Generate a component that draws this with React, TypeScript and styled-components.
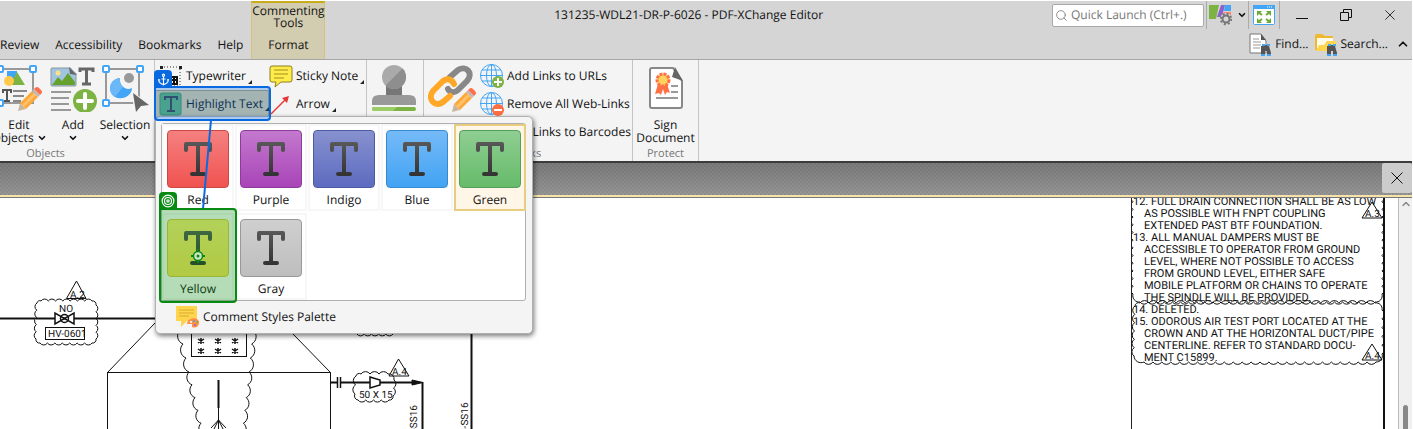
import React from 'react';
import styled, { createGlobalStyle } from 'styled-components';
import { Anchor, ChevronDown, ChevronUp, Search, Target } from 'lucide-react';

const Global = createGlobalStyle`
  * { box-sizing: border-box; }
  html, body { margin: 0; background: #fff; }
  body { font: 12px/16px "Open Sans", "Noto Sans", sans-serif; color: #111; overflow: hidden; text-rendering: geometricPrecision; }
  button, input { font: inherit; color: inherit; text-rendering: inherit; }
  button { border: 0; background: none; padding: 0; margin: 0; }
  svg { display: block; flex: none; }
`;

const Page = styled.div`
  display: flex;
  flex-direction: column;
  height: 100vh;
  padding-right: 1px;
  border-top: 1px solid #fff;
`;

/* ---------- title bar and tabs ---------- */
const Header = styled.header`
  display: flex;
  height: 59px;
  flex: none;
  background: #d5d5d5;
  border-bottom: 1px solid #a6a6a6;
`;
const Tabs = styled.nav`
  display: flex;
  align-items: flex-end;
  gap: 16px;
  padding-right: 8px;
`;
const Tab = styled.button`
  height: 28px;
  white-space: nowrap;
`;
const ContextTab = styled.button`
  display: flex;
  flex-direction: column;
  align-items: center;
  justify-content: space-between;
  width: 74px;
  padding: 2px 0 8px;
  line-height: 12px;
  background: #d2ccb0;
  border: solid #d6c27c;
  border-width: 0 1px;
  border-top: 2px solid #c9ab1b;
`;
const Title = styled.h1`
  flex: 1;
  margin: 0;
  padding-top: 6px;
  font-size: 12px;
  line-height: 16px;
  font-weight: 400;
  text-align: center;
`;
const HeaderTools = styled.div`
  display: flex;
  flex-direction: column;
  width: 360px;
`;
const ToolRow = styled.div`
  display: flex;
  align-items: center;
  height: 28px;
`;
const FindRow = styled(ToolRow)`
  justify-content: flex-end;
  gap: 6px;
  height: 31px;
`;
const SearchBox = styled.label`
  display: flex;
  align-items: center;
  gap: 3px;
  width: 152px;
  height: 23px;
  padding-left: 2px;
  background: #fff;
  border: 1px solid #a9a9a9;
  border-radius: 2px;
  color: #777;
  input { width: 124px; border: 0; padding: 0; outline: 0; background: none; }
  input::placeholder { color: #777; opacity: 1; }
`;
const ToolButton = styled.button<{ $w: number; $line?: boolean }>`
  display: flex;
  align-items: center;
  justify-content: center;
  gap: 5px;
  width: ${p => p.$w}px;
  height: 28px;
  border-right: ${p => (p.$line ? '1px solid #aaa' : '0')};
`;
const Divider = styled.span`
  width: 1px;
  height: 28px;
  margin-left: 2px;
  background: #aaa;
`;
const FindButton = styled.button`
  display: flex;
  align-items: center;
  gap: 3px;
  height: 24px;
`;

/* ---------- ribbon ---------- */
const Ribbon = styled.section`
  display: flex;
  flex: none;
  height: 103px;
  background: #f4f4f4;
  border-bottom: 2px solid #3c3c3c;
`;
const Group = styled.div<{ $w: number }>`
  position: relative;
  display: flex;
  flex-direction: column;
  justify-content: space-between;
  width: ${p => p.$w}px;
  border-right: 1px solid #c4c4c4;
`;
const GroupBody = styled.div`
  display: flex;
`;
const GroupLabel = styled.div<{ $w?: number }>`
  width: ${p => (p.$w ? p.$w + 'px' : '100%')};
  font-size: 11px;
  line-height: 15px;
  text-align: center;
  color: #777;
`;
const BigButton = styled.button<{ $w: number; $pull?: number }>`
  display: flex;
  flex-direction: column;
  align-items: center;
  width: ${p => p.$w}px;
  margin-left: ${p => -(p.$pull ?? 0)}px;
  padding-top: 4px;
  line-height: 13px;
  white-space: nowrap;
  svg + span { margin-top: 6px; }
  span { display: flex; align-items: center; gap: 3px; }
  span + svg { margin-top: 2px; }
`;
const CommandGrid = styled.div`
  display: grid;
  grid-template-columns: 114px 97px;
  grid-auto-rows: 28px;
  padding-top: 2px;
`;
const Command = styled.button<{ $hot?: boolean }>`
  display: flex;
  align-items: center;
  gap: 3px;
  padding: 0 0 0 ${p => (p.$hot ? 3 : 4)}px;
  white-space: nowrap;
  background: ${p => (p.$hot ? '#e6d59f' : 'none')};
  border: ${p => (p.$hot ? '1px solid #b5a268' : '0')};
`;
const SideCommand = styled(Command)`
  padding-left: 0;
`;
const MoreMark = styled.i`
  align-self: flex-end;
  width: 0;
  height: 0;
  margin: 0 0 6px -1px;
  border-left: 4px solid transparent;
  border-bottom: 4px solid #222;
`;
const LinkList = styled.div`
  display: flex;
  flex-direction: column;
  padding-top: 2px;
`;
const LinkCommand = styled.button`
  display: flex;
  align-items: center;
  gap: 3px;
  height: 28px;
  white-space: nowrap;
`;

/* ---------- style gallery ---------- */
const Popup = styled.div`
  position: absolute;
  z-index: 2;
  top: 56px;
  left: 0;
  width: 378px;
  padding: 6px 6px 0 5px;
  background: #f4f4f4;
  border: 1px solid #b0b0b0;
  border-radius: 5px;
  box-shadow: 1px 2px 5px #0008;
`;
const Gallery = styled.div`
  display: grid;
  grid-template-columns: repeat(5, 73px);
  grid-auto-rows: 89px;
  height: 178px;
  background: #fff;
  border: 1px solid #b0b0b0;
  border-radius: 3px;
`;
const Swatch = styled.button<{ $active?: boolean }>`
  display: flex;
  flex-direction: column;
  align-items: center;
  gap: 4px;
  width: 72px;
  height: 87px;
  padding-top: 4px;
  background: ${p => (p.$active ? '#fff6e8' : '#fff')};
  border: 2px solid ${p => (p.$active ? '#e8cc80' : '#f7f7f7')};
`;
const SwatchTile = styled.span<{ $from: string; $to: string; $edge: string }>`
  display: grid;
  place-items: center;
  width: 62px;
  height: 58px;
  border: 1px solid ${p => p.$edge};
  border-radius: 4px;
  background: linear-gradient(${p => p.$from}, ${p => p.$to});
`;
const PaletteButton = styled.button`
  display: flex;
  align-items: center;
  gap: 3px;
  height: 32px;
  padding-left: 14px;
`;

/* ---------- guide markers ---------- */
const Marker = styled.div<{ $x: number; $y: number; $w: number; $h: number; $c: string; $fill: string }>`
  position: absolute;
  z-index: 4;
  pointer-events: none;
  left: ${p => p.$x}px;
  top: ${p => p.$y}px;
  width: ${p => p.$w}px;
  height: ${p => p.$h}px;
  display: grid;
  place-items: center;
  border: 2px solid ${p => p.$c};
  border-radius: 0 4px 4px 4px;
  background: ${p => p.$fill};
`;
const Badge = styled.span<{ $c: string }>`
  position: absolute;
  left: -2px;
  bottom: 100%;
  display: grid;
  place-items: center;
  width: 18px;
  height: 18px;
  border-radius: 4px 4px 0 0;
  background: ${p => p.$c};
`;
const Pointer = styled.svg`
  position: absolute;
  z-index: 3;
  pointer-events: none;
  left: 0;
  top: 0;
`;

/* ---------- document ---------- */
const DocBar = styled.div`
  display: flex;
  flex: none;
  justify-content: flex-end;
  height: 34px;
  background: repeating-conic-gradient(#0001 0 25%, #fff0 0 50%) 0 0 / 4px 4px, linear-gradient(#7b7b7b, #979797);
  border-bottom: 2px solid #f7e3aa;
`;
const CloseDoc = styled.button`
  display: grid;
  place-items: center;
  width: 30px;
  height: 30px;
  background: #ccc;
  border-radius: 2px;
`;
const Doc = styled.main`
  display: flex;
  flex: 1;
  min-height: 0;
  overflow: hidden;
  border-top: 1px solid #777;
  font-family: Roboto, "Liberation Sans", sans-serif;
`;
const Sheet = styled.div`
  flex: 1;
  min-width: 0;
  overflow: hidden;
`;
const Notes = styled.aside`
  position: relative;
  width: 254px;
  overflow: hidden;
  border-left: 1px solid #222;
  border-right: 2px solid #111;
`;
const NoteList = styled.ol`
  margin: -2px 0 0;
  padding: 0 0 0 1px;
  list-style: none;
  font-size: 11px;
  line-height: 12px;
  white-space: nowrap;
`;
const Note = styled.li`
  padding-left: 11px;
  text-indent: -11px;
  div { text-indent: 0; }
`;
const Clouds = styled.svg`
  position: absolute;
  left: 0;
  top: 0;
`;
const ScrollBar = styled.div`
  display: flex;
  flex-direction: column;
  justify-content: space-between;
  align-items: center;
  width: 14px;
  margin-left: 13px;
  background: #f0f0f0;
  border-left: 1px solid #bbb;
`;
const Thumb = styled.span`
  width: 5px;
  height: 24px;
  border-radius: 3px 3px 0 0;
  background: #888;
`;

const LetterT = () => (
  <svg width="28" height="34" viewBox="0 0 28 34" fill="none" stroke="url(#ink)" strokeWidth="4" strokeLinecap="round" strokeLinejoin="round">
    <defs><linearGradient id="ink" gradientUnits="userSpaceOnUse" x1="0" y1="0" x2="0" y2="34"><stop stopColor="#585858" /><stop offset="1" stopColor="#333" /></linearGradient></defs>
    <path d="M2 8V2H26V8M14 2V32M8 32H20" />
  </svg>
);

const Handles = ({ pts }: { pts: number[][] }) => (
  <g fill="#fff" stroke="#42a5f5" strokeWidth="2">
    {pts.map(([x, y]) => <rect key={x + '-' + y} x={x} y={y} width="6" height="6" rx="1" />)}
  </g>
);
const Pencil = ({ x = 0, y = 0 }: { x?: number; y?: number }) => (
  <g transform={`translate(${x} ${y})`}>
    <path d="M0 24L2 16L8 22Z" fill="#c9b6a0" />
    <path d="M2 16L14 4L20 10L8 22Z" fill="#ffa83a" />
    <path d="M4 18L16 6L18 8L6 20Z" fill="#ffc16c" />
    <path d="M14 4L16 2L22 8L20 10Z" fill="#bbb" />
    <path d="M16 2L17 1Q19 -1 21 1L23 3Q25 5 23 7L22 8Z" fill="#ff6e4a" />
  </g>
);
const EditIcon = () => (
  <svg width="48" height="48" viewBox="0 0 48 48">
    <path d="M4 5H38V39H4Z" fill="none" stroke="#999" strokeWidth="2" />
    <path d="M12 7H22V17H12Z" fill="#42a5f5" /><path d="M22 8L30 21H15Z" fill="#7cb342" /><circle cx="14" cy="17" r="5" fill="#ffca4b" />
    <path d="M3 24H22V38H3ZM23 24H34L24 38Z" fill="#f4f4f4" />
    <path d="M8 29V26H16V29M12 26V37M9 37H15" stroke="#555" strokeWidth="2" fill="none" />
    <path d="M18 27H32M18 32H29M18 37H26" stroke="#888" strokeWidth="2" />
    <Handles pts={[[2, 2], [35, 2], [2, 36]]} /><Pencil x={23} y={23} />
  </svg>
);
const AddIcon = () => (
  <svg width="48" height="48" viewBox="0 0 48 48">
    <rect x="2" y="4" width="25" height="18" rx="1" fill="#9fc5e0" stroke="#8b959c" /><circle cx="9" cy="9" r="2.500" fill="#ffe082" />
    <path d="M3 21L9 13L13 17L19 9L26 18V21Z" fill="#66a12e" /><path d="M21 3L28 10V3Z" fill="#f4f4f4" /><path d="M20 3L28 11L21 10Z" fill="#666" />
    <path d="M31 8V5H44V8M37.500 5V20M33 20H42" fill="none" stroke="#666" strokeWidth="3" />
    <path d="M2 28H22M2 34H20M2 40H20M2 46H22" stroke="#999" strokeWidth="2" />
    <circle cx="36" cy="37" r="12" fill="#7cb342" /><path d="M36 30V44M29 37H43" stroke="#fff" strokeWidth="4" strokeLinecap="round" />
  </svg>
);
const SelectionIcon = () => (
  <svg width="48" height="48" viewBox="0 0 48 48">
    <path d="M5 5H38V39H5Z" fill="none" stroke="#999" strokeWidth="2" />
    <path d="M19 14C8 15 6 28 14 33C22 37 31 31 31 24C25 27 18 22 19 14Z" fill="#42a5f5" /><path d="M19 14C8 15 6 28 14 33L22 23Q18 19 19 14Z" fill="#6ab8f8" /><circle cx="28" cy="14" r="5" fill="#999" />
    <path d="M31 27L48 40V48H33Z" fill="#f4f4f4" />
    <Handles pts={[[2, 2], [36, 2], [2, 36]]} /><path d="M32 29L48 41L40 42L35 48Z" fill="#666" />
  </svg>
);
const StampIcon = () => (
  <svg width="46" height="48" viewBox="0 0 46 48">
    <path d="M15 20H31V31H15Z" fill="#777" /><circle cx="23" cy="13" r="12" fill="#aaa" /><path d="M31.500 4.500A12 12 0 0 1 14.500 21.500Z" fill="#8e8e8e" />
    <path d="M1 41V37Q1 31 8 31H38Q45 31 45 37V41Z" fill="#999" /><rect x="1" y="43" width="44" height="4" rx="2" fill="#7cb342" /><path d="M3 43H26L22 47H3Q1 47 1 45Q1 43 3 43Z" fill="#9ccc65" />
  </svg>
);
const ChainIcon = () => (
  <svg width="48" height="48" viewBox="0 0 48 48">
    <g fill="none" strokeWidth="6" strokeLinecap="round" strokeLinejoin="round">
      <path d="M20 25C22 29 27 29 30 26L39 17C46 9 38 1 30 6L22 13" stroke="#888" />
      <path d="M26 20C23 14 18 14 14 18L5 27C-1 35 7 44 15 38L22 32" stroke="#ffa726" />
    </g><Pencil x={24} y={24} />
  </svg>
);
const SignIcon = () => (
  <svg width="36" height="48" viewBox="0 0 36 48">
    <path d="M4 4H25L34 17V42Q34 44 32 44H4Q2 44 2 42V6Q2 4 4 4Z" fill="#fff" stroke="#888" strokeWidth="2" />
    <path d="M27 2H36V16Z" fill="#f4f4f4" /><path d="M27 3L35 17L24 13Z" fill="#666" />
    <path d="M10 20L7 30L11 29L13 31L15 25L17 31L19 28L22 29L19 20Z" fill="#ff7045" /><circle cx="15" cy="16" r="6" fill="#ffd35c" stroke="#ff7045" strokeWidth="3" strokeDasharray="3 1" />
    <path d="M23 22H30M23 28H30M8 34H30" stroke="#999" strokeWidth="2" />
  </svg>
);
const Globe = ({ add }: { add?: boolean }) => (
  <svg width="24" height="26" viewBox="0 0 24 26">
    <g fill="none" stroke="#42a5f5"><circle cx="11.500" cy="12.500" r="11" /><ellipse cx="11.500" cy="12.500" rx="5" ry="11" /><path d="M11.500 1V24M0 12.500H23M2 7H21M2 18H21" /></g>
    <circle cx="18" cy="19" r="6" fill={add ? '#7cb342' : '#ff6d45'} /><path d={add ? 'M18 15V23M14 19H22' : 'M14 19H22'} stroke="#fff" strokeWidth="2" />
  </svg>
);
const NoteIcon = () => (
  <svg width="24" height="24" viewBox="0 0 24 24"><path d="M3 2H21Q23 2 23 4V16Q23 18 21 18H12L6 23L7 18H3Q1 18 1 16V4Q1 2 3 2Z" fill="#ffeb4a" stroke="#8d801c" /><path d="M5 6H19M5 10H19M5 14H15" stroke="#a08f22" /></svg>
);
const ArrowIcon = () => (
  <svg width="24" height="24" viewBox="0 0 24 24"><path d="M2 22L17 7" stroke="#e53935" strokeWidth="1.500" /><path d="M20 4L13 6L18 11Z" fill="#e53935" /></svg>
);
const TypeIcon = () => (
  <svg width="24" height="24" viewBox="0 0 24 24"><rect x="2" y="3" width="19" height="18" fill="none" stroke="#333" strokeDasharray="1 2" /><g fill="#222"><rect x="1" y="2" width="3" height="3" /><rect x="20" y="2" width="3" height="3" /></g><path d="M12 13H18V20H12M15 13V20M12 16H18" fill="none" stroke="#111" strokeWidth="2" /></svg>
);
const TextMarkIcon = () => (
  <svg width="24" height="24" viewBox="0 0 24 24"><rect x="1" y="1" width="21" height="22" rx="2" fill="#66bb6a" stroke="#4c9a50" /><path d="M6 8V5H18V8M12 5V19M8 19H16" stroke="#444" strokeWidth="2" fill="none" /></svg>
);
const CustomizeIcon = () => (
  <svg width="24" height="22" viewBox="0 0 24 22"><path d="M1 1H11L8 15H1Z" fill="#7cb342" /><path d="M13 1H17L14 13H9Z" fill="#8c61cf" /><path d="M17 1H23V7H16Z" fill="#42a5f5" /><path d="M16 8H23V14H14Z" fill="#ff8a65" /><circle cx="18" cy="15" r="6" fill="#d5d5d5" /><circle cx="18" cy="15" r="3.500" fill="none" stroke="#777" strokeWidth="2" /><circle cx="18" cy="15" r="5.200" fill="none" stroke="#777" strokeWidth="2" strokeDasharray="2 2.080" /></svg>
);
const FullIcon = () => (
  <svg width="22" height="20" viewBox="0 0 22 20"><rect x="0.500" y="0.500" width="21" height="19" rx="1" fill="#fff" stroke="#42a5f5" /><path d="M0 0H22V4H0Z" fill="#42a5f5" /><path d="M14 2H20" stroke="#fff" strokeDasharray="1 1" /><path d="M4 6H9L4 11ZM18 6H13L18 11ZM4 18V13L9 18ZM18 18V13L13 18Z" fill="#69ad35" /><path d="M5 7L9 10M17 7L13 10M5 17L9 14M17 17L13 14" stroke="#69ad35" strokeWidth="2" /></svg>
);
const Binoculars = () => (
  <g><path d="M12 13H16V12H18V13H20L22 20V22H18V18H16V22H12V20Z" fill="#555" /><path d="M13 12H16M18 12H21M12 22H16M18 22H22" stroke="#42a5f5" strokeWidth="2" /></g>
);
const FindIcon = () => (
  <svg width="23" height="23" viewBox="0 0 23 23"><path d="M1 1H12L17 8V20H1Z" fill="#fff" stroke="#777" /><path d="M12 1V7H17Z" fill="#555" /><path d="M4 6H10M4 9H12M4 12H12M4 15H11" stroke="#999" /><Binoculars /></svg>
);
const FolderIcon = () => (
  <svg width="23" height="23" viewBox="0 0 23 23"><path d="M0 3Q0 1 2 1H7L10 3H18V7H2V17H0Z" fill="#efb82d" /><path d="M2 5H18V17H2Z" fill="#fffbe8" /><path d="M1 18L4 12H9L12 8H22L18 18Z" fill="#ffd54f" /><Binoculars /></svg>
);
const PaletteIcon = () => (
  <svg width="25" height="24" viewBox="0 0 25 24"><path d="M1 1H22V16H12L6 22V16H1Z" fill="#ffd54f" /><path d="M4 5H19M4 8H19M4 11H14" stroke="#d9aa2c" /><path d="M12 19Q12 14 19 13Q25 14 24 19Q22 24 17 22L17 19Z" fill="#ff9046" /><g fill="#fff"><circle cx="16" cy="17" r="1" /><circle cx="19" cy="16" r="1" fill="#42a5f5" /><circle cx="22" cy="17" r="1" fill="#7cb342" /><circle cx="20" cy="20" r="1" fill="#8c61cf" /></g></svg>
);
const CrossIcon = ({ size }: { size: number }) => (
  <svg width={size} height={size} viewBox="0 0 12 12"><path d="M0.500 0.500L11.500 11.500M11.500 0.500L0.500 11.500" stroke="#111" /></svg>
);
const AimIcon = () => (
  <svg width="14" height="14" viewBox="0 0 14 14" fill="none"><circle cx="7" cy="7" r="4.500" fill="#cfe3c8" stroke="#078a12" strokeWidth="1.500" /><path d="M7 0V3M7 11V14M0 7H3M11 7H14" stroke="#078a12" strokeWidth="2" /><circle cx="7" cy="7" r="1.500" fill="#078a12" /></svg>
);

/** Scalloped outline through the given corner points; bumps face outwards when listed clockwise. */
function cloud(points: number[][], size: number) {
  let d = `M${points[0][0]} ${points[0][1]}`;
  for (let i = 1; i < points.length; i++) {
    const [ax, ay] = points[i - 1];
    const [bx, by] = points[i];
    const n = Math.max(1, Math.round(Math.hypot(bx - ax, by - ay) / size));
    const r = (Math.hypot(bx - ax, by - ay) / n) * 0.6;
    for (let k = 1; k <= n; k++) d += `A${r} ${r} 0 0 1 ${ax + ((bx - ax) * k) / n} ${ay + ((by - ay) * k) / n}`;
  }
  return d;
}

const Drawing = () => (
  <svg width="600" height="231" viewBox="0 198 600 231" fill="none" stroke="#111" fontSize="10">
    <path d="M0 318.500H155" strokeWidth="2" />
    <path d={cloud([[37, 303], [41, 301], [92, 301], [96, 305], [96, 339], [92, 343], [40, 343], [36, 339], [37, 303]], 7)} fill="#fff" />
    <path d="M36 318.500H97" strokeWidth="2" />
    <path d="M55 313V324L74 313V324Z" fill="#fff" strokeWidth="1.500" /><circle cx="64.500" cy="318.500" r="4" strokeWidth="1.500" />
    <rect x="45.500" y="327.500" width="39" height="12" />
    <path d="M76.500 281L86 298.500H66.500Z" />
    <path d="M107.500 429V372.500L155 323H165M107 372.500H330.500V429M330.500 372.500L293 334" />
    <path d={cloud([[204, 436], [189, 372], [180, 330]], 13)} /><path d={cloud([[253, 330], [249, 372], [242, 436]], 13)} />
    <rect x="191.500" y="330.500" width="55" height="26" />
    <path d="M218.500 380V408" strokeWidth="2" /><path d="M218.500 408V429M218.500 420L211 428M218.500 420L226 428M218.500 420L214 429M218.500 420L223 429" />
    <path d={cloud([[393, 334], [357, 334]], 7)} />
    <path d="M471.500 334V429M422.500 382V429" strokeWidth="2" />
    <path d="M331 382.500H337M341 382.500H418" strokeWidth="2" /><path d="M337.500 377V388M340.500 377V388" strokeWidth="1.500" /><path d="M412 380L423 382.500L412 385Z" fill="#111" />
    <path d={cloud([[356, 376], [361, 374], [388, 374], [394, 380], [393, 396], [389, 400], [358, 400], [355, 394], [356, 376]], 8)} />
    <path d="M370 377L380 380V385L370 388Z" fill="#fff" strokeWidth="1.500" />
    <path d="M398.500 359L409 376H389Z" />
    <g fill="#111" stroke="none">
      <text x="59" y="312">NO</text><text x="48" y="337">HV-0601</text><text x="70" y="298">A.2</text>
      <text x="359" y="398">50 X 15</text><text x="392" y="375">A.4</text>
      <text transform="translate(417 431) rotate(-90)">-SS16</text><text transform="translate(468 434) rotate(-90)">6-SS16</text>
    </g>
    <g strokeWidth="1.500">{[201, 218, 235].map(x => [341, 351].map(y => <path key={x + '/' + y} d={`M${x} ${y - 3}V${y + 3}M${x - 3} ${y - 2}L${x + 3} ${y + 2}M${x - 3} ${y + 2}L${x + 3} ${y - 2}`} />))}</g>
  </svg>
);

const styles = [
  ['Red', '#f58080', '#f05350', '#cc4644'], ['Purple', '#c379ce', '#a944b8', '#8f3b9d'], ['Indigo', '#8791cf', '#5d6bc0', '#4e59a4'],
  ['Blue', '#75baf8', '#42a3f3', '#398acd'], ['Green', '#8fce92', '#66bb6a', '#579d5a'], ['Yellow', '#fdf079', '#fde65a', '#dcc845'], ['Gray', '#cfcfcf', '#bebebe', '#999'],
];

export default function App() {
  return (
    <Page>
      <Global />
      <Header>
        <Tabs>{['Review', 'Accessibility', 'Bookmarks', 'Help'].map(t => <Tab key={t}>{t}</Tab>)}</Tabs>
        <ContextTab><span>Commenting<br />Tools</span><span>Format</span></ContextTab>
        <Title>131235-WDL21-DR-P-6026 - PDF-XChange Editor</Title>
        <HeaderTools>
          <ToolRow>
            <SearchBox><Search size={13} strokeWidth={1.5} /><input aria-label="Quick Launch" placeholder="Quick Launch (Ctrl+.)" /></SearchBox>
            <Divider />
            <ToolButton $w={43} $line aria-label="Customize"><CustomizeIcon /><ChevronDown size={10} strokeWidth={4} /></ToolButton>
            <ToolButton $w={31} $line aria-label="Full screen"><FullIcon /></ToolButton>
            <ToolButton $w={44} aria-label="Minimize"><svg width="12" height="12"><path d="M0 9.500H12" stroke="#111" /></svg></ToolButton>
            <ToolButton $w={44} aria-label="Restore"><svg width="13" height="13" fill="none" stroke="#111"><path d="M0.500 3.500H8.500V11.500H0.500ZM3.500 3V0.500H11.500V8.500H9" /></svg></ToolButton>
            <ToolButton $w={44} aria-label="Close"><CrossIcon size={10} /></ToolButton>
          </ToolRow>
          <FindRow>
            <FindButton><FindIcon />Find...</FindButton><FindButton><FolderIcon />Search...</FindButton>
            <ToolButton $w={18} aria-label="Collapse ribbon"><ChevronUp size={14} strokeWidth={3} /></ToolButton>
          </FindRow>
        </HeaderTools>
      </Header>

      <Ribbon>
        <Group $w={155}>
          <GroupBody>
            <BigButton $w={54} $pull={8}><EditIcon /><span>Edit</span><span>Objects<ChevronDown size={10} strokeWidth={4} /></span></BigButton>
            <BigButton $w={54}><AddIcon /><span>Add</span><ChevronDown size={10} strokeWidth={4} /></BigButton>
            <BigButton $w={50}><SelectionIcon /><span>Selection</span><ChevronDown size={10} strokeWidth={4} /></BigButton>
          </GroupBody>
          <GroupLabel $w={91}>Objects</GroupLabel>
        </Group>
        <Group $w={212}>
          <CommandGrid>
            <Command><TypeIcon />Typewriter<MoreMark /></Command>
            <SideCommand><NoteIcon />Sticky Note<MoreMark /></SideCommand>
            <Command $hot><TextMarkIcon />Highlight Text<MoreMark /></Command>
            <SideCommand><ArrowIcon />Arrow<MoreMark /></SideCommand>
          </CommandGrid>
          <Popup>
            <Gallery>
              {styles.map(([name, from, to, edge]) => (
                <Swatch key={name} $active={name === 'Green'}><SwatchTile $from={from} $to={to} $edge={edge}><LetterT /></SwatchTile>{name}</Swatch>
              ))}
            </Gallery>
            <PaletteButton><PaletteIcon />Comment Styles Palette</PaletteButton>
          </Popup>
          <Pointer width="90" height="160"><path d="M56 60L48 149" stroke="#0a6be0" strokeWidth="2" /></Pointer>
          <Marker $x={-1} $y={26} $w={117} $h={35} $c="#0969e0" $fill="#0969e04d"><Badge $c="#0969e0"><Anchor size={13} color="#fff" /></Badge></Marker>
          <Marker $x={4} $y={148} $w={78} $h={95} $c="#078a12" $fill="#078a124d"><Badge $c="#078a12"><Target size={14} color="#fff" /></Badge><AimIcon /></Marker>
        </Group>
        <Group $w={57}><GroupBody><BigButton $w={54}><StampIcon /></BigButton></GroupBody></Group>
        <Group $w={209}>
          <GroupBody>
            <BigButton $w={56}><ChainIcon /></BigButton>
            <LinkList>
              <LinkCommand><Globe add />Add Links to URLs</LinkCommand>
              <LinkCommand><Globe />Remove All Web-Links</LinkCommand>
              <LinkCommand><Globe add />Add Links to Barcodes</LinkCommand>
            </LinkList>
          </GroupBody>
          <GroupLabel>Links</GroupLabel>
        </Group>
        <Group $w={66}>
          <GroupBody><BigButton $w={65}><SignIcon /><span>Sign</span><span>Document</span></BigButton></GroupBody>
          <GroupLabel>Protect</GroupLabel>
        </Group>
      </Ribbon>

      <DocBar><CloseDoc aria-label="Close document"><CrossIcon size={12} /></CloseDoc></DocBar>
      <Doc>
        <Sheet><Drawing /></Sheet>
        <Notes>
          <NoteList>
            <Note>12. FULL DRAIN CONNECTION SHALL BE AS LOW<div>AS POSSIBLE WITH FNPT COUPLING</div><div>EXTENDED PAST BTF FOUNDATION.</div></Note>
            <Note>13. ALL MANUAL DAMPERS MUST BE<div>ACCESSIBLE TO OPERATOR FROM GROUND</div><div>LEVEL, WHERE NOT POSSIBLE TO ACCESS</div><div>FROM GROUND LEVEL, EITHER SAFE</div><div>MOBILE PLATFORM OR CHAINS TO OPERATE</div><div>THE SPINDLE WILL BE PROVIDED.</div></Note>
            <Note>14. DELETED.</Note>
            <Note>15. ODOROUS AIR TEST PORT LOCATED AT THE<div>CROWN AND AT THE HORIZONTAL DUCT/PIPE</div><div>CENTERLINE. REFER TO STANDARD DOCU-</div><div>MENT C15899.</div></Note>
          </NoteList>
          <Clouds width="253" height="231" fill="none" stroke="#111">
            <path d={cloud([[250, -4], [250, 96], [243, 104], [8, 104], [1, 96], [1, -4]], 8)} />
            <path d={cloud([[3, 108], [8, 105], [243, 105], [250, 112], [250, 156], [244, 164], [12, 164], [2, 158], [3, 108]], 9)} />
            <path d="M240 4L250 20H230ZM240 146L250 162H230Z" />
            <g fill="#111" stroke="none" fontSize="10"><text x="233" y="19">A.3</text><text x="233" y="161">A.4</text></g>
          </Clouds>
        </Notes>
        <ScrollBar><ChevronUp size={12} strokeWidth={3} color="#888" /><Thumb /></ScrollBar>
      </Doc>
    </Page>
  );
}
